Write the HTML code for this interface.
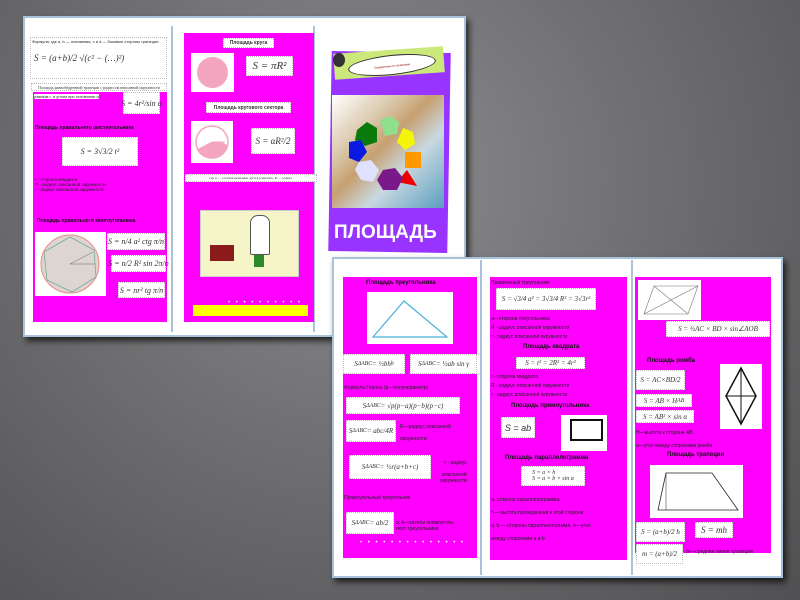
<!DOCTYPE html>
<html><head><meta charset="utf-8"><style>
*{margin:0;padding:0;box-sizing:border-box}
body{width:800px;height:600px;overflow:hidden;position:relative;font-family:"Liberation Sans",sans-serif;
background:radial-gradient(ellipse at 45% 30%,#8c8c8e 0%,#707072 45%,#505052 100%);}
.a{position:absolute}
.frame{position:absolute;background:#fff;border:2px solid #a9c3dc;box-shadow:3px 4px 6px rgba(0,0,0,.7)}
.pk{position:absolute;background:#f0f}
.wb{position:absolute;background:#fff;border:1px dotted #bbb;font-family:"Liberation Serif",serif;font-style:italic;color:#333;display:flex;align-items:center;justify-content:center;white-space:nowrap}
.t{position:absolute;font-size:5px;color:#222;white-space:nowrap}
.h{position:absolute;font-size:6px;font-weight:bold;color:#111;white-space:nowrap}
.vl{position:absolute;width:2px;background:#a9c3dc}
</style></head><body>

<div class="frame" style="left:23px;top:16px;width:443px;height:321px"></div>
<div class="vl" style="left:171px;top:26px;height:306px"></div>
<div class="vl" style="left:313px;top:26px;height:306px"></div>
<div class="wb" style="left:30px;top:37px;width:137px;height:42px;font-size:9px;justify-content:flex-start;padding-left:3px">S = (a+b)/2 √(c² − (…)²)</div>
<div class="t" style="left:32px;top:39px;font-size:4px">Формула, где a, b — основания, c и d — боковые стороны трапеции</div>
<div class="wb" style="left:31px;top:83px;width:136px;height:8px;font-size:4px;font-style:normal">Площадь равнобедренной трапеции с радиусом вписанной окружности</div>
<div class="pk" style="left:33px;top:92px;width:134px;height:230px"></div>
<div class="t" style="left:34px;top:94px;font-size:4px;background:#fff">равным r, и углом при основании α</div>
<div class="wb" style="left:123px;top:92px;width:37px;height:22px;font-size:8px">S = 4r²/sin α</div>
<div class="h" style="left:35px;top:125px;font-size:5px">Площадь правильного шестиугольника</div>
<div class="wb" style="left:62px;top:137px;width:76px;height:29px;font-size:8px">S = 3√3/2 t²</div>
<div class="t" style="left:35px;top:177px;font-size:4.5px">t - сторона квадрата<br>R - радиус описанной окружности<br>r - радиус вписанной окружности</div>
<div class="h" style="left:37px;top:218px;font-size:5px">Площадь правильного многоугольника</div>
<div class="a" style="left:35px;top:232px;width:71px;height:64px;background:#fff"><svg width="71" height="64"><circle cx="35" cy="32" r="29" fill="#ddd5d0" stroke="#e88" stroke-width="1"/><polygon points="35,5 59,18 61,45 37,60 12,48 9,20" fill="none" stroke="#7a9" stroke-width=".8"/><line x1="35" y1="32" x2="58" y2="20" stroke="#666" stroke-width=".5"/><line x1="35" y1="32" x2="60" y2="32" stroke="#666" stroke-width=".5"/></svg></div>
<div class="wb" style="left:107px;top:233px;width:58px;height:17px;font-size:8px">S = n/4 a² ctg π/n</div>
<div class="wb" style="left:111px;top:255px;width:55px;height:17px;font-size:8px">S = n/2 R² sin 2π/n</div>
<div class="wb" style="left:118px;top:282px;width:47px;height:16px;font-size:8px">S = nr² tg π/n</div>

<div class="pk" style="left:184px;top:33px;width:130px;height:289px"></div>
<div class="wb" style="left:223px;top:38px;width:51px;height:10px;font-size:5px;font-style:normal;font-weight:bold;font-family:'Liberation Sans'">Площадь круга</div>
<div class="a" style="left:191px;top:53px;width:43px;height:39px;background:#fff"><div class="a" style="left:6px;top:4px;width:31px;height:31px;border-radius:50%;background:#f4a6c0"></div></div>
<div class="wb" style="left:246px;top:56px;width:47px;height:20px;font-size:11px">S = πR²</div>
<div class="wb" style="left:206px;top:102px;width:85px;height:11px;font-size:5px;font-style:normal;font-weight:bold;font-family:'Liberation Sans'">Площадь кругового сектора</div>
<div class="a" style="left:191px;top:121px;width:42px;height:42px;background:#fff"><svg width="42" height="42"><path d="M21 21 L31 21 L36 24 A16 16 0 0 1 6 29 Z" fill="#f4a6c0"/><circle cx="21" cy="21" r="16" fill="none" stroke="#f4a6c0" stroke-width="1.5"/><path d="M6 29 L21 21 L34 21" fill="none" stroke="#f4a6c0" stroke-width="1"/></svg></div>
<div class="wb" style="left:251px;top:128px;width:44px;height:26px;font-size:9px">S = αR²/2</div>
<div class="wb" style="left:185px;top:174px;width:132px;height:8px;font-size:3.5px;font-style:normal">где α — угловая величина дуги в радианах, R — радиус</div>
<div class="a" style="left:200px;top:210px;width:99px;height:67px;background:#f5f5c8;border:1px solid #ccc"></div>
<div class="a" style="left:210px;top:245px;width:24px;height:16px;background:#8b1a1a"></div>
<div class="a" style="left:250px;top:215px;width:20px;height:40px;background:#fff;border:1px solid #555;border-radius:8px 8px 2px 2px"></div>
<div class="a" style="left:254px;top:255px;width:10px;height:12px;background:#2a8a2a"></div>
<div class="a" style="left:193px;top:305px;width:115px;height:11px;background:#ff0"></div>
<div class="t" style="left:228px;top:300px;color:#fff;font-size:6px;letter-spacing:2px">• • • • • • • • • •</div>

<div class="a" style="left:330px;top:52px;width:119px;height:200px;background:#9933ff;transform:rotate(1deg)"></div>
<div class="a" style="left:334px;top:50px;width:110px;height:26px;background:#cbe87a;transform:rotate(-4deg)"></div>
<div class="a" style="left:348px;top:55px;width:88px;height:20px;background:#fff;border:1px solid #333;border-radius:50%;transform:rotate(-6deg);font-size:3px;color:#900;text-align:center;line-height:20px">Справочник по геометрии</div>
<div class="a" style="left:333px;top:53px;width:12px;height:14px;background:#333;border-radius:50%"></div>
<div class="a" style="left:332px;top:95px;width:112px;height:113px;background:linear-gradient(135deg,#fff 0%,#d8c6a8 30%,#c7a070 45%,#c8d8e0 65%,#5a9ec0 100%)"></div>
<svg class="a" style="left:345px;top:110px" width="85" height="85"><polygon points="12,20 22,12 32,18 32,32 20,36 10,30" fill="#0a7a0a"/><polygon points="35,10 45,6 54,12 52,24 40,26" fill="#8ee08e"/><polygon points="58,18 68,22 70,34 60,40 52,32" fill="#f5f50a"/><rect x="60" y="42" width="16" height="16" fill="#f90"/><polygon points="62,60 72,76 52,72" fill="#e00"/><polygon points="38,60 50,58 58,68 52,80 38,80 32,70" fill="#7a1a8a"/><polygon points="14,52 26,50 34,60 28,72 16,70 10,60" fill="#e0e0ff"/><polygon points="4,32 16,30 22,42 14,52 4,48" fill="#0a1ae0"/></svg>
<div class="a" style="left:334px;top:222px;font-size:19px;font-weight:bold;color:#fff;letter-spacing:0px">ПЛОЩАДЬ</div>

<div class="frame" style="left:332px;top:257px;width:451px;height:321px"></div>
<div class="vl" style="left:480px;top:260px;height:315px"></div>
<div class="vl" style="left:631px;top:260px;height:315px"></div>
<div class="pk" style="left:343px;top:277px;width:134px;height:281px"></div>
<div class="h" style="left:366px;top:280px">Площадь треугольника</div>
<div class="a" style="left:367px;top:292px;width:86px;height:52px;background:#fff"><svg width="86" height="52"><polygon points="6,45 37,9 80,45" fill="none" stroke="#4ab0d8" stroke-width="1.2"/></svg></div>
<div class="wb" style="left:343px;top:354px;width:62px;height:20px;font-size:7px">S<sub>ΔABC</sub> = ½bh<sub>b</sub></div>
<div class="wb" style="left:410px;top:354px;width:67px;height:20px;font-size:7px">S<sub>ΔABC</sub> = ½ab sin γ</div>
<div class="t" style="left:344px;top:385px">Формула Герона (p—полупериметр)</div>
<div class="wb" style="left:346px;top:397px;width:114px;height:17px;font-size:7px">S<sub>ΔABC</sub> = √p(p−a)(p−b)(p−c)</div>
<div class="wb" style="left:346px;top:420px;width:50px;height:22px;font-size:7px">S<sub>ΔABC</sub> = abc/4R</div>
<div class="t" style="left:400px;top:424px">R—радиус описанной<br><br>окружности</div>
<div class="wb" style="left:349px;top:455px;width:82px;height:24px;font-size:7px">S<sub>ΔABC</sub> = ½r(a+b+c)</div>
<div class="t" style="left:440px;top:460px;text-align:right">r - радиус<br><br>вписанной<br>окружности</div>
<div class="t" style="left:344px;top:495px">Прямоугольный треугольник</div>
<div class="wb" style="left:346px;top:512px;width:48px;height:22px;font-size:7px">S<sub>ΔABC</sub> = ab/2</div>
<div class="t" style="left:396px;top:520px">a, b—катеты прямоуголь-<br>ного треугольника</div>
<div class="t" style="left:360px;top:540px;color:#fff;font-size:6px;letter-spacing:2px">• • • • • • • • • • • • • •</div>

<div class="pk" style="left:490px;top:277px;width:137px;height:283px"></div>
<div class="t" style="left:491px;top:280px">Правильный треугольник</div>
<div class="wb" style="left:496px;top:288px;width:100px;height:22px;font-size:7px">S = √3/4 a² = 3√3/4 R² = 3√3r²</div>
<div class="t" style="left:491px;top:315px;line-height:9px">a—сторона треугольника<br>R - радиус описанной окружности<br>r - радиус вписанной окружности</div>
<div class="h" style="left:523px;top:344px">Площадь квадрата</div>
<div class="wb" style="left:516px;top:357px;width:69px;height:12px;font-size:7px">S = t² = 2R² = 4r²</div>
<div class="t" style="left:491px;top:373px;line-height:9px">t - сторона квадрата<br>R - радиус описанной окружности<br>r - радиус вписанной окружности</div>
<div class="h" style="left:511px;top:403px">Площадь прямоугольника</div>
<div class="wb" style="left:501px;top:417px;width:34px;height:21px;font-size:9px;font-family:'Liberation Sans'">S = ab</div>
<div class="a" style="left:561px;top:415px;width:46px;height:36px;background:#fff"><div class="a" style="left:9px;top:4px;width:33px;height:22px;border:2px solid #111"></div></div>
<div class="h" style="left:505px;top:455px">Площадь параллелограмма</div>
<div class="wb" style="left:521px;top:466px;width:64px;height:20px;font-size:6px;flex-direction:column">S = a × h<br>S = a × b × sin α</div>
<div class="t" style="left:491px;top:494px;line-height:13px">a- сторона параллелограмма,<br>h— высота проведенная к этой стороне<br>a, b — стороны параллелограмма, α—угол<br>между сторонами a и b</div>

<div class="pk" style="left:635px;top:277px;width:136px;height:276px"></div>
<div class="a" style="left:638px;top:280px;width:63px;height:40px;background:#fff"><svg width="63" height="40"><polygon points="6,34 16,6 60,6 50,34" fill="none" stroke="#777" stroke-width=".6"/><line x1="6" y1="34" x2="60" y2="6" stroke="#777" stroke-width=".6"/><line x1="16" y1="6" x2="50" y2="34" stroke="#777" stroke-width=".6"/></svg></div>
<div class="wb" style="left:666px;top:321px;width:104px;height:16px;font-size:7px">S = ½AC × BD × sin∠AOB</div>
<div class="h" style="left:647px;top:358px">Площадь ромба</div>
<div class="wb" style="left:636px;top:370px;width:49px;height:20px;font-size:7px">S = AC×BD/2</div>
<div class="wb" style="left:636px;top:394px;width:56px;height:13px;font-size:7px">S = AB × H<sub>AB</sub></div>
<div class="wb" style="left:636px;top:410px;width:58px;height:13px;font-size:7px">S = AB² × sin α</div>
<div class="a" style="left:720px;top:364px;width:42px;height:65px;background:#fff"><svg width="42" height="65"><polygon points="21,4 36,32 21,60 6,32" fill="none" stroke="#111" stroke-width="1.5"/><line x1="6" y1="32" x2="36" y2="32" stroke="#111"/><line x1="21" y1="4" x2="21" y2="60" stroke="#111"/></svg></div>
<div class="t" style="left:636px;top:427px;line-height:13px">H—высота к стороне AB<br>α—угол между сторонами ромба</div>
<div class="h" style="left:667px;top:452px">Площадь трапеции</div>
<div class="a" style="left:650px;top:465px;width:93px;height:53px;background:#fff"><svg width="93" height="53"><polygon points="8,45 16,8 62,8 88,45" fill="none" stroke="#222" stroke-width=".8"/><line x1="16" y1="8" x2="16" y2="45" stroke="#222" stroke-width=".5"/></svg></div>
<div class="wb" style="left:636px;top:522px;width:49px;height:20px;font-size:7px">S = (a+b)/2 h</div>
<div class="wb" style="left:695px;top:522px;width:38px;height:16px;font-size:9px">S = mh</div>
<div class="wb" style="left:636px;top:544px;width:47px;height:20px;font-size:7px">m = (a+b)/2</div>
<div class="t" style="left:686px;top:549px">m—средняя линия трапеции</div>
</body></html>
